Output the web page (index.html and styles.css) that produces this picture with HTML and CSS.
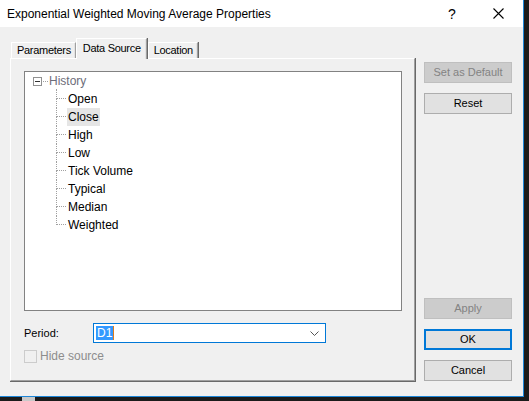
FILE: index.html
```html
<!DOCTYPE html>
<html lang="en">
<head>
  <meta charset="UTF-8">
  <title>Exponential Weighted Moving Average Properties</title>
  <link rel="stylesheet" href="styles.css">
</head>
<body>
  <div class="window">
    <div class="titlebar">
      <div class="title">Exponential Weighted Moving Average Properties</div>
      <div class="title-help">?</div>
      <div class="title-close">
        <svg width="11" height="11" viewBox="0 0 11 11"><path d="M0.5 0.5 L10.5 10.5 M10.5 0.5 L0.5 10.5" stroke="#000" stroke-width="1.1" fill="none"/></svg>
      </div>
    </div>
    <div class="dialog">
      <div class="tabs-col">
        <div class="tabstrip">
          <div class="tab tab-first">Parameters</div>
          <div class="tab tab-active">Data Source</div>
          <div class="tab">Location</div>
        </div>
        <div class="panel">
          <div class="tree">
            <div class="root-row">
              <span class="expander"><span class="minus"></span></span>
              <span class="root-dots"></span>
              <span class="root-label">History</span>
            </div>
            <div class="children">
              <div class="node"><span class="node-label">Open</span></div>
              <div class="node"><span class="node-label selected">Close</span></div>
              <div class="node"><span class="node-label">High</span></div>
              <div class="node"><span class="node-label">Low</span></div>
              <div class="node"><span class="node-label">Tick Volume</span></div>
              <div class="node"><span class="node-label">Typical</span></div>
              <div class="node"><span class="node-label">Median</span></div>
              <div class="node node-last"><span class="node-label">Weighted</span></div>
            </div>
          </div>
          <div class="period-row">
            <div class="period-label">Period:</div>
            <div class="combo">
              <span class="combo-value">D1</span><span class="caret"></span>
              <svg class="chevron" width="9" height="5" viewBox="0 0 9 5"><path d="M0.5 0.5 L4.5 4.5 L8.5 0.5" stroke="#555" stroke-width="1" fill="none"/></svg>
            </div>
          </div>
          <div class="check-row">
            <span class="checkbox"></span>
            <span class="check-label">Hide source</span>
          </div>
        </div>
      </div>
      <div class="buttons-col">
        <div class="btn btn-disabled">Set as Default</div>
        <div class="btn">Reset</div>
        <div class="spacer"></div>
        <div class="btn btn-disabled">Apply</div>
        <div class="btn btn-default">OK</div>
        <div class="btn btn-last">Cancel</div>
      </div>
    </div>
  </div>
  <div class="taskbar"><span class="task-item"></span></div>
</body>
</html>
```

FILE: styles.css
```css
body {
  margin: 0;
  padding: 0;
  width: 529px;
  height: 401px;
  overflow: hidden;
  background-color: #1b1b1b;
  font-family: "Liberation Sans", Arial, sans-serif;
  font-size: 11px;
  color: #000;
}

.window {
  width: 523px;
  height: 396px;
  background-color: #f0f0f0;
  border-right: 1px solid #1c86d8;
  border-bottom: 1px solid #1c86d8;
}

.titlebar {
  height: 27px;
  background-color: #fff;
  display: flex;
  align-items: center;
}
.title {
  font-size: 12px;
  padding-left: 7px;
  flex: 1;
}
.title-help {
  font-size: 14px;
  width: 46px;
  text-align: center;
  padding-left: 4px;
}
.title-close {
  width: 46px;
  display: flex;
  justify-content: center;
  padding-right: 2px;
}

.dialog {
  display: flex;
  padding-top: 10px;
  padding-left: 10px;
}

.tabs-col {
  width: 405px;
}

.tabstrip {
  height: 21px;
  display: flex;
  align-items: flex-end;
  padding-left: 1px;
  position: relative;
  z-index: 1;
  letter-spacing: -0.3px;
}
.tab {
  height: 15px;
  line-height: 15px;
  padding: 0 4px 0 5px;
  border-top: 1px solid #fff;
  border-left: 1px solid #fff;
  border-right: 1px solid #a0a0a0;
  box-shadow: inset -1px 0 0 #e3e3e3, 1px 0 0 #696969;
  margin-right: 1px;
}
.tab-active {
  height: 20px;
  line-height: 18px;
  margin-left: -1px;
  padding: 0 5px 0 6px;
  margin-bottom: -1px;
  background-color: #f0f0f0;
}

.panel {
  height: 309px;
  border-top: 1px solid #fff;
  border-left: 1px solid #fff;
  border-right: 1px solid #a0a0a0;
  border-bottom: 1px solid #a0a0a0;
  box-shadow: 1px 0 0 #696969, 0 1px 0 #696969, 1px 1px 0 #696969;
  padding: 12px 0 0 13px;
}

.tree {
  width: 376px;
  height: 238px;
  background-color: #fff;
  border: 1px solid #828282;
  font-size: 12px;
}
.root-row {
  height: 18px;
  display: flex;
  align-items: center;
  padding-left: 8px;
}
.expander {
  width: 7px;
  height: 7px;
  border: 1px solid #919191;
  display: flex;
  align-items: center;
  justify-content: center;
}
.minus {
  width: 5px;
  height: 1px;
  background-color: #333;
}
.root-dots {
  width: 5px;
  margin-left: 1px;
  border-top: 1px dotted #a0a0a0;
}
.root-label {
  color: #6d6d7a;
  margin-left: 1px;
}

.children {
  padding-left: 31px;
}
.node {
  height: 18px;
  position: relative;
  padding-left: 11px;
  display: flex;
  align-items: center;
}
.node::before {
  content: "";
  position: absolute;
  left: 0;
  top: -1px;
  width: 9px;
  height: 9px;
  border-left: 1px dotted #a0a0a0;
  border-bottom: 1px dotted #a0a0a0;
}
.node::after {
  content: "";
  position: absolute;
  left: 0;
  top: 9px;
  bottom: 0;
  border-left: 1px dotted #a0a0a0;
}
.node-last::after {
  display: none;
}
.node-label {
  padding: 1px 1px;
  line-height: 16px;
}
.selected {
  background-color: #e5e5e5;
}

.period-row {
  display: flex;
  align-items: center;
  margin-top: 12px;
  height: 20px;
}
.period-label {
  width: 69px;
}
.combo {
  width: 231px;
  height: 18px;
  background-color: #fff;
  border: 1px solid #0078d7;
  display: flex;
  align-items: center;
  position: relative;
  font-size: 12px;
}
.combo-value {
  margin-left: 2px;
  background-color: #3399ff;
  color: #fff;
  line-height: 14px;
  padding: 0 1px;
}
.caret {
  width: 1px;
  height: 14px;
  background-color: #e07b1a;
}
.chevron {
  margin-left: auto;
  margin-right: 6px;
}

.check-row {
  display: flex;
  align-items: center;
  margin-top: 6px;
  color: #8d8d8d;
  font-size: 12px;
}
.checkbox {
  width: 11px;
  height: 11px;
  border: 1px solid #cccccc;
  background-color: #f0f0f0;
  margin-right: 3px;
}

.buttons-col {
  width: 88px;
  margin-left: 9px;
  margin-top: 25px;
  height: 319px;
  display: flex;
  flex-direction: column;
}
.btn {
  height: 19px;
  line-height: 19px;
  background-color: #e1e1e1;
  border: 1px solid #adadad;
  text-align: center;
  margin-bottom: 10px;
}
.btn-last {
  margin-bottom: 0;
}
.btn-disabled {
  background-color: #cccccc;
  border-color: #bfbfbf;
  color: #838383;
}
.btn-default {
  border: 2px solid #0078d7;
  height: 17px;
  line-height: 17px;
}
.spacer {
  flex: 1;
}

.taskbar {
  height: 4px;
  display: flex;
}
.task-item {
  width: 13px;
  margin-left: 22px;
  background-color: #c9c9c9;
}
```
